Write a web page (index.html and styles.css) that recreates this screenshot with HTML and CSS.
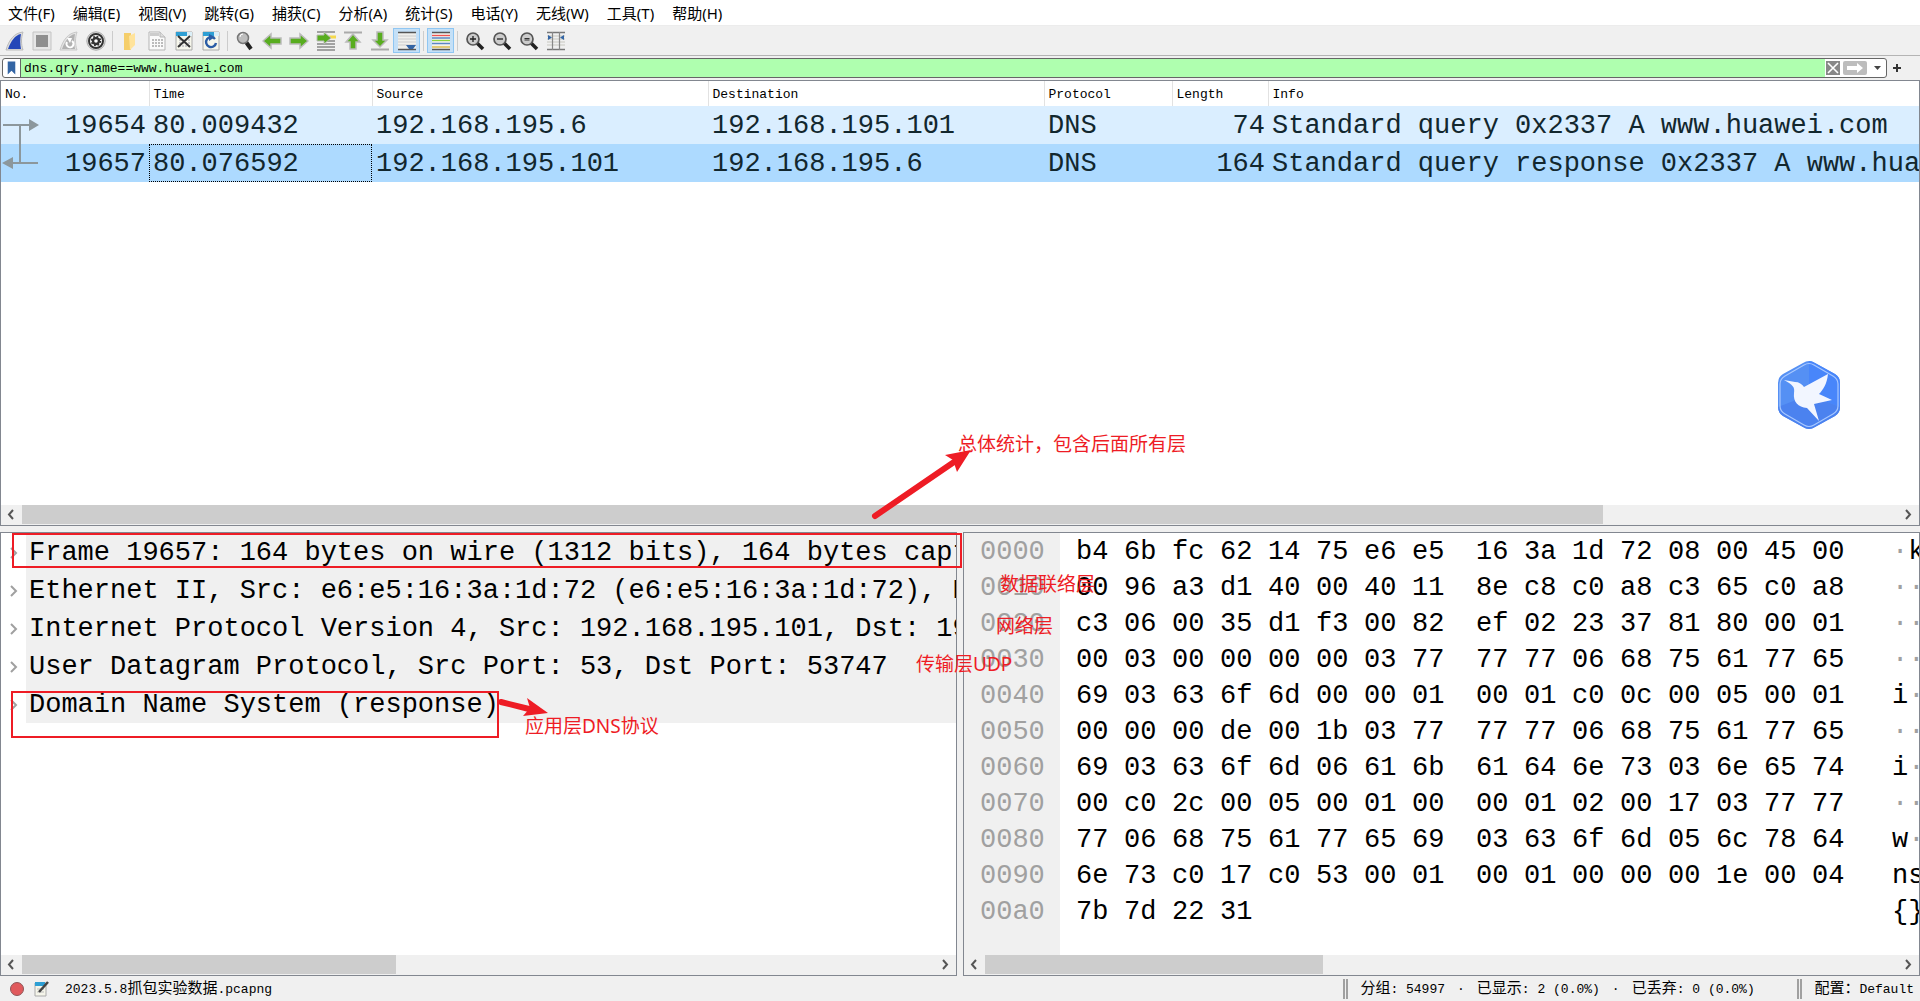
FILE: index.html
```html
<!DOCTYPE html>
<html lang="zh-CN">
<head>
<meta charset="utf-8">
<title>2023.5.8抓包实验数据.pcapng</title>
<link rel="stylesheet" href="styles.css">
</head>
<body>
<nav class="menu">
  <button>文件(F)</button><button>编辑(E)</button><button>视图(V)</button><button>跳转(G)</button><button>捕获(C)</button><button>分析(A)</button><button>统计(S)</button><button>电话(Y)</button><button>无线(W)</button><button>工具(T)</button><button>帮助(H)</button>
</nav>

<div class="toolbar">
  <button aria-label="开始捕获"><svg viewBox="0 0 20 20"><path d="M1 19C4 9 9 2 18 1c-2 6-2 12 0 18z" fill="#ddd" stroke="#bbb"/><path d="M3 18C6 10 10 4 16 3c-1 5-1 10 0 15z" fill="#2447b8"/></svg></button>
  <button aria-label="停止捕获"><svg viewBox="0 0 20 20"><path d="M1 1h18v18H1z" fill="#e6e6e6" stroke="#c4c4c4"/><path d="M4 4h12v12H4z" fill="#8f8f8f"/></svg></button>
  <button aria-label="重新捕获"><svg viewBox="0 0 20 20"><path d="M1 19C4 9 9 2 18 1c-2 6-2 12 0 18z" fill="#e4e4e4" stroke="#c8c8c8"/><path d="M3 18C6 10 10 4 16 3c-1 5-1 10 0 15z" fill="#b2b2b2"/><path d="M8 11a3.500 3.500 0 1 0 5-1" fill="none" stroke="#fff" stroke-width="2"/><path d="M8 7l5 0-2 5z" fill="#fff"/></svg></button>
  <button aria-label="捕获选项"><svg viewBox="0 0 20 20"><circle cx="10" cy="10" r="9.200" fill="#ddd" stroke="#aaa"/><circle cx="10" cy="10" r="7" fill="#fff" stroke="#333" stroke-width="2"/><circle cx="10" cy="10" r="3" fill="none" stroke="#333" stroke-width="2.400"/><circle cx="10" cy="10" r="4.500" fill="none" stroke="#333" stroke-width="1.600" stroke-dasharray="1.770"/></svg></button>
  <i class="sep"></i>
  <button aria-label="打开"><svg viewBox="0 0 20 20"><path d="M4 2h7v17H4z" fill="#f5ce6a"/><path d="M9 5l6-3v12l-5 5z" fill="#ffe39b"/></svg></button>
  <button aria-label="保存"><svg viewBox="0 0 20 20"><path d="M2 1h11l5 5v13H2z" fill="#fafafa" stroke="#b5b5b5"/><path d="M3 2h9v3H3z" fill="#ccc"/><path d="M13 1v5h5" fill="#ddd" stroke="#b5b5b5"/><path d="M5 9h11M5 12h11M5 15h11" stroke="#bbb" stroke-width="2" stroke-dasharray="2 1"/></svg></button>
  <button aria-label="关闭文件"><svg viewBox="0 0 20 20"><path d="M2 1h16v18H2z" fill="#f7f7ec" stroke="#aaa"/><path d="M2 1h16v4H2z" fill="#2e9fd4"/><path d="M13 1h5v4h-5z" fill="#dbeff8"/><path d="M5 9h11M5 12h11M5 15h11" stroke="#ccc" stroke-width="2" stroke-dasharray="2 1"/><path d="M4 5l12 11M16 5L4 16" stroke="#333" stroke-width="2"/></svg></button>
  <button aria-label="重新载入"><svg viewBox="0 0 20 20"><path d="M2 1h16v18H2z" fill="#f7f7ec" stroke="#aaa"/><path d="M2 1h16v4H2z" fill="#2e9fd4"/><path d="M13 1h5v4h-5z" fill="#dbeff8"/><path d="M14 8a5 5 0 1 0 1 4" fill="none" stroke="#2b5da5" stroke-width="2.400"/><path d="M8 3v7l6-4z" fill="#2b5da5"/></svg></button>
  <i class="sep"></i>
  <button aria-label="查找"><svg viewBox="0 0 20 20"><path d="M11 11l5 7" stroke="#222" stroke-width="4"/><circle cx="8" cy="7" r="5.500" fill="#bdbdbd" stroke="#777" stroke-width="1.500"/><path d="M5 6a3 3 0 0 1 3-3" stroke="#fff" fill="none"/></svg></button>
  <button aria-label="后退"><svg viewBox="0 0 20 20"><path d="M1 10l8-7v4h10v6H9v4z" fill="#58ad1f" stroke="#bbb" stroke-width="1.500"/></svg></button>
  <button aria-label="前进"><svg viewBox="0 0 20 20"><path d="M19 10l-8-7v4H1v6h10v4z" fill="#58ad1f" stroke="#bbb" stroke-width="1.500"/></svg></button>
  <button aria-label="转到分组"><svg viewBox="0 0 20 20"><path d="M1 1h18M1 13h18M1 16h18M1 19h18M10 10h9" stroke="#555" stroke-width="1.200"/><path d="M13 6h7" stroke="#f5d94d" stroke-width="3"/><path d="M15 7L8 1v3H1v6h7v3z" fill="#58ad1f" stroke="#bbb"/></svg></button>
  <button aria-label="首个分组"><svg viewBox="0 0 20 20"><path d="M1 1.500h18" stroke="#aaa" stroke-width="2"/><path d="M10 3l7 8h-4v7H7v-7H3z" fill="#58ad1f" stroke="#bbb" stroke-width="1.500"/></svg></button>
  <button aria-label="末个分组"><svg viewBox="0 0 20 20"><path d="M1 18.500h18" stroke="#aaa" stroke-width="2"/><path d="M10 16L3 9h4V1h6v8h4z" fill="#58ad1f" stroke="#bbb" stroke-width="1.500"/></svg></button>
  <button class="on" aria-label="自动滚动"><svg viewBox="0 0 20 20"><path d="M1 1h18v18H1z" fill="#f0f0ec"/><path d="M1 1.500h18M1 18.500h18" stroke="#555" stroke-width="1.300"/><path d="M1 5h18M1 8h18M1 11h18M1 14h18" stroke="#ccc"/><path d="M9 14h10l-3 4h-4z" fill="#3465a4"/></svg></button>
  <i class="sep"></i>
  <button class="on" aria-label="着色"><svg viewBox="0 0 20 20"><path d="M1 1h18v18H1z" fill="#f3f3ee"/><path d="M1 1.500h18M1 18.500h18" stroke="#555" stroke-width="1.300"/><path d="M1 4.500h18" stroke="#ef5350" stroke-width="1.300"/><path d="M1 7h18M1 12.500h18" stroke="#5b86c4" stroke-width="1.300"/><path d="M1 9.500h18" stroke="#8bd53f" stroke-width="1.300"/><path d="M1 16h18" stroke="#d9b338" stroke-width="1.300"/></svg></button>
  <i class="sep"></i>
  <button aria-label="放大"><svg viewBox="0 0 20 20"><path d="M12 12l6 6" stroke="#222" stroke-width="3.500"/><circle cx="8" cy="8" r="6" fill="#ccc" stroke="#555" stroke-width="1.700"/><path d="M5 8h6M8 5v6" stroke="#222" stroke-width="1.300"/></svg></button>
  <button aria-label="缩小"><svg viewBox="0 0 20 20"><path d="M12 12l6 6" stroke="#222" stroke-width="3.500"/><circle cx="8" cy="8" r="6" fill="#ccc" stroke="#555" stroke-width="1.700"/><path d="M5 8h6" stroke="#222" stroke-width="1.300"/></svg></button>
  <button aria-label="原始大小"><svg viewBox="0 0 20 20"><path d="M12 12l6 6" stroke="#222" stroke-width="3.500"/><circle cx="8" cy="8" r="6" fill="#ccc" stroke="#555" stroke-width="1.700"/><path d="M5.500 7.500h5M5.500 9h5" stroke="#333" stroke-width="1"/></svg></button>
  <button aria-label="调整列宽"><svg viewBox="0 0 20 20"><path d="M1 1.500h18M1 18.500h18" stroke="#777" stroke-width="1.300"/><path d="M1 5h18M1 8h18M1 11h18M1 14h18" stroke="#c8c8c0"/><path d="M6.500 1v18M13.500 1v18" stroke="#888" stroke-width="1.200"/><path d="M2 4l4 2.500L2 9zM18 4l-4 2.500L18 9z" fill="#3465a4"/></svg></button>
</div>

<div class="filter">
  <div class="field">
    <button class="mark" aria-label="书签"><svg viewBox="0 0 18 18"><path d="M5 2h8v14l-4-4-4 4z" fill="#3465a4"/></svg></button>
    <input aria-label="显示过滤器" value="dns.qry.name==www.huawei.com">
    <button class="clear" aria-label="清除"><svg viewBox="0 0 14 14"><path d="M2 2l10 10M12 2L2 12" stroke="#fff" stroke-width="1.600"/></svg></button>
    <button class="apply" aria-label="应用"><svg viewBox="0 0 24 14"><path d="M4 5h10V2l6 5-6 5V9H4z" fill="#fff"/></svg></button>
    <button class="drop" aria-label="历史"><svg viewBox="0 0 17 14"><path d="M5 5h7l-3.500 4z" fill="#444"/></svg></button>
  </div>
  <button class="plus" aria-label="添加"><svg viewBox="0 0 16 16"><path d="M8 4v8M4 8h8" stroke="#333" stroke-width="2"/></svg></button>
</div>

<main>
  <section class="pane packets">
    <div class="view">
      <table class="list">
        <colgroup><col class="c-no"><col class="c-time"><col class="c-addr"><col class="c-addr"><col class="c-proto"><col class="c-len"><col></colgroup>
        <thead><tr><th>No.</th><th>Time</th><th>Source</th><th>Destination</th><th>Protocol</th><th>Length</th><th>Info</th></tr></thead>
        <tbody>
          <tr><td class="num first">19654<svg class="flow" viewBox="0 0 40 76"><path d="M2 19h28M19 19v38M10 57h27" fill="none" stroke="#8c979c" stroke-width="2"/><path d="M28 13l10 6-10 6zM12 51L1 57l11 6z" fill="#8c979c"/></svg></td><td>80.009432</td><td>192.168.195.6</td><td>192.168.195.101</td><td>DNS</td><td class="num">74</td><td>Standard query 0x2337 A www.huawei.com</td></tr>
          <tr class="sel"><td class="num">19657</td><td class="focus">80.076592</td><td>192.168.195.101</td><td>192.168.195.6</td><td>DNS</td><td class="num">164</td><td>Standard query response 0x2337 A www.huawei.com</td></tr>
        </tbody>
      </table>
    </div>
    <div class="scroll"><button aria-label="向左"><svg viewBox="0 0 21 19"><path d="M12 5L8 9.500l4 4.500" /></svg></button><div class="track"><div class="thumb" style="width:84.3%"></div></div><button aria-label="向右"><svg viewBox="0 0 21 19"><path d="M8 5l4 4.500L8 14"/></svg></button></div>
  </section>

  <div class="lower">
    <section class="pane details">
      <ul class="tree">
        <li><button aria-label="展开"><svg viewBox="0 0 25 38"><path d="M10 15l5 5-5 5"/></svg></button><span>Frame 19657: 164 bytes on wire (1312 bits), 164 bytes captured</span></li>
        <li><button aria-label="展开"><svg viewBox="0 0 25 38"><path d="M10 15l5 5-5 5"/></svg></button><span>Ethernet II, Src: e6:e5:16:3a:1d:72 (e6:e5:16:3a:1d:72), Dst</span></li>
        <li><button aria-label="展开"><svg viewBox="0 0 25 38"><path d="M10 15l5 5-5 5"/></svg></button><span>Internet Protocol Version 4, Src: 192.168.195.101, Dst: 192</span></li>
        <li><button aria-label="展开"><svg viewBox="0 0 25 38"><path d="M10 15l5 5-5 5"/></svg></button><span>User Datagram Protocol, Src Port: 53, Dst Port: 53747</span></li>
        <li><button aria-label="展开"><svg viewBox="0 0 25 38"><path d="M10 15l5 5-5 5"/></svg></button><span>Domain Name System (response)</span></li>
      </ul>
      <div class="scroll"><button aria-label="向左"><svg viewBox="0 0 21 19"><path d="M12 5L8 9.500l4 4.500"/></svg></button><div class="track"><div class="thumb" style="width:41%"></div></div><button aria-label="向右"><svg viewBox="0 0 21 19"><path d="M8 5l4 4.500L8 14"/></svg></button></div>
    </section>

    <section class="pane bytes">
      <div class="dump">
        <table class="hex">
          <tbody>
          <tr><th>0000</th><td>b4</td><td>6b</td><td>fc</td><td>62</td><td>14</td><td>75</td><td>e6</td><td>e5</td><td>16</td><td>3a</td><td>1d</td><td>72</td><td>08</td><td>00</td><td>45</td><td>00</td><td class="ascii"><i>·</i>k</td></tr>
          <tr><th>0010</th><td>00</td><td>96</td><td>a3</td><td>d1</td><td>40</td><td>00</td><td>40</td><td>11</td><td>8e</td><td>c8</td><td>c0</td><td>a8</td><td>c3</td><td>65</td><td>c0</td><td>a8</td><td class="ascii"><i>··</i></td></tr>
          <tr><th>0020</th><td>c3</td><td>06</td><td>00</td><td>35</td><td>d1</td><td>f3</td><td>00</td><td>82</td><td>ef</td><td>02</td><td>23</td><td>37</td><td>81</td><td>80</td><td>00</td><td>01</td><td class="ascii"><i>··</i></td></tr>
          <tr><th>0030</th><td>00</td><td>03</td><td>00</td><td>00</td><td>00</td><td>00</td><td>03</td><td>77</td><td>77</td><td>77</td><td>06</td><td>68</td><td>75</td><td>61</td><td>77</td><td>65</td><td class="ascii"><i>··</i></td></tr>
          <tr><th>0040</th><td>69</td><td>03</td><td>63</td><td>6f</td><td>6d</td><td>00</td><td>00</td><td>01</td><td>00</td><td>01</td><td>c0</td><td>0c</td><td>00</td><td>05</td><td>00</td><td>01</td><td class="ascii">i<i>·</i></td></tr>
          <tr><th>0050</th><td>00</td><td>00</td><td>00</td><td>de</td><td>00</td><td>1b</td><td>03</td><td>77</td><td>77</td><td>77</td><td>06</td><td>68</td><td>75</td><td>61</td><td>77</td><td>65</td><td class="ascii"><i>··</i></td></tr>
          <tr><th>0060</th><td>69</td><td>03</td><td>63</td><td>6f</td><td>6d</td><td>06</td><td>61</td><td>6b</td><td>61</td><td>64</td><td>6e</td><td>73</td><td>03</td><td>6e</td><td>65</td><td>74</td><td class="ascii">i<i>·</i></td></tr>
          <tr><th>0070</th><td>00</td><td>c0</td><td>2c</td><td>00</td><td>05</td><td>00</td><td>01</td><td>00</td><td>00</td><td>01</td><td>02</td><td>00</td><td>17</td><td>03</td><td>77</td><td>77</td><td class="ascii"><i>··</i></td></tr>
          <tr><th>0080</th><td>77</td><td>06</td><td>68</td><td>75</td><td>61</td><td>77</td><td>65</td><td>69</td><td>03</td><td>63</td><td>6f</td><td>6d</td><td>05</td><td>6c</td><td>78</td><td>64</td><td class="ascii">w<i>·</i></td></tr>
          <tr><th>0090</th><td>6e</td><td>73</td><td>c0</td><td>17</td><td>c0</td><td>53</td><td>00</td><td>01</td><td>00</td><td>01</td><td>00</td><td>00</td><td>00</td><td>1e</td><td>00</td><td>04</td><td class="ascii">ns</td></tr>
          <tr><th>00a0</th><td>7b</td><td>7d</td><td>22</td><td>31</td><td></td><td></td><td></td><td></td><td></td><td></td><td></td><td></td><td></td><td></td><td></td><td></td><td class="ascii">{}</td></tr>
          </tbody>
        </table>
      </div>
      <div class="scroll"><button aria-label="向左"><svg viewBox="0 0 21 19"><path d="M12 5L8 9.500l4 4.500"/></svg></button><div class="track"><div class="thumb" style="width:37%"></div></div><button aria-label="向右"><svg viewBox="0 0 21 19"><path d="M8 5l4 4.500L8 14"/></svg></button></div>
    </section>
  </div>
</main>

<footer class="status">
  <svg class="dot" viewBox="0 0 16 16"><circle cx="8" cy="8" r="6.500" fill="#e0595c" stroke="#8f5557"/></svg>
  <svg class="note" viewBox="0 0 16 16"><path d="M1 2h11v13H1z" fill="#f5f5ea" stroke="#aaa"/><path d="M1 1h10v4H1z" fill="#2e9fd4"/><path d="M3 8h7M3 11h7" stroke="#bbb"/><path d="M5 11L14 1" stroke="#444" stroke-width="2.500"/></svg>
  <span class="file">2023.5.8<b>抓包实验数据</b>.pcapng</span>
  <span class="counts"><span><b>分组</b>: 54997</span><span>·</span><span><b>已显示</b>: 2 (0.0%)</span><span>·</span><span><b>已丢弃</b>: 0 (0.0%)</span></span>
  <span class="profile"><span><b>配置：</b>Default</span></span>
</footer>

<svg class="marks" viewBox="0 0 1000 760" width="1000" height="760">
  <g fill="none" stroke="#ee1c25" stroke-width="2"><path d="M13 534h948v33H13zM12 692h486v45H12z"/></g>
  <g stroke="#ee1c25" stroke-width="6" stroke-linecap="round"><path d="M875 516l79-54M501 702l28 7"/></g>
  <path d="M971 450l-26 5 8 5 4 12zM548 713l-21-15 3 10-7 8z" fill="#ee1c25"/>
</svg>
<span class="tag tag-all">总体统计，包含后面所有层</span>
<span class="tag tag-link">数据联络层</span>
<span class="tag tag-net">网络层</span>
<span class="tag tag-udp">传输层UDP</span>
<span class="tag tag-dns">应用层DNS协议</span>

<svg class="bird" viewBox="0 0 64 70">
  <path d="M26 3q6-4 12 0l20 11q5 3 5 9v24q0 6-5 9L38 67q-6 4-12 0L6 56q-5-3-5-9V23q0-6 5-9z" fill="#5590f4"/>
  <path d="M32 1q3 0 6 2l20 11q5 3 5 9v24L32 35z" fill="#4886fa"/>
  <path d="M63 47q0 6-5 9L38 67q-6 4-12 0L6 56q-5-3-5-9l31-12z" fill="#4b82ef"/>
  <path d="M27 5q5-3 10 0l19 11q5 3 5 8v22q0 5-5 8L37 65q-5 3-10 0L8 54q-5-3-5-8V24q0-5 5-8z" fill="none" stroke="#a8c8ff" stroke-width="1.200"/>
  <path d="M7 20l11 2c4 0 7 2 9 5L51 14c-1 10-5 16-9 20l13 6-18 4 5 17-12-13c-9-1-14-6-13-15 1-6-1-8-10-13z" fill="#f2f6ff"/>
</svg>
</body>
</html>
```
FILE: styles.css
```css
* { box-sizing: border-box; }
body {
  margin: 0;
  height: 100vh;
  display: flex;
  flex-direction: column;
  position: relative;
  overflow: hidden;
  background: #f0f0f0;
  color: #000;
  font: 13px/16px "Liberation Mono", "Noto Sans CJK SC", monospace;
}
button {
  margin: 0;
  padding: 0;
  border: 0;
  background: none;
  color: inherit;
  font: inherit;
}
svg { display: block; }

.menu {
  display: flex;
  gap: 18px;
  height: 26px;
  padding: 0 8px;
  background: #fff;
  border-bottom: 1px solid #ececec;
  font: 15px/24px "Noto Sans", "Noto Sans CJK SC", sans-serif;
}

.toolbar {
  display: flex;
  align-items: center;
  height: 30px;
  padding: 0 1px;
  border-bottom: 1px solid #b4b4b4;
}
.toolbar button {
  display: grid;
  place-items: center;
  width: 27px;
  height: 25px;
}
.toolbar svg { width: 20px; height: 20px; }
.toolbar .on { background: #c4e0f7; border: 1px solid #8fc6f2; }
.sep { width: 1px; height: 20px; margin: 0 3px; background: #ccc; }

.filter {
  display: flex;
  align-items: center;
  gap: 2px;
  height: 24px;
  padding: 0 15px 0 2px;
}
.field {
  flex: 1;
  display: flex;
  align-items: center;
  height: 20px;
  border: 1px solid #666;
  border-radius: 3px;
  background: #fff;
  overflow: hidden;
}
.mark svg { width: 17px; height: 18px; }
.field input {
  flex: 1;
  min-width: 0;
  height: 18px;
  border: 0;
  border-left: 1px solid #666;
  padding: 0 3px;
  background: #afffaf;
  color: #000;
  font: inherit;
  outline: 0;
}
.clear { background: #888; width: 14px; height: 14px; margin: 0 3px 0 1px; }
.apply { background: #bdbdbd; width: 24px; height: 14px; border-radius: 2px; }
.drop { width: 17px; margin-left: 2px; }
.plus { width: 16px; }

main {
  flex: 1;
  min-height: 0;
  display: flex;
  flex-direction: column;
  gap: 6px;
}
.pane {
  display: flex;
  flex-direction: column;
  min-width: 0;
  background: #fff;
  border: 1px solid #828790;
  overflow: hidden;
}
.packets { flex: 1 1 0; min-height: 0; }
.lower {
  flex: 1 1 0;
  min-height: 0;
  display: flex;
  gap: 6px;
}
.details { flex: 957 1 0; }
.bytes { flex: 957 1 0; }
.view, .tree, .dump { flex: 1; min-height: 0; overflow: hidden; }

.list {
  width: 100%;
  table-layout: fixed;
  border-collapse: collapse;
  white-space: nowrap;
}
.c-no { width: 148px; }
.c-time { width: 223px; }
.c-addr { width: 336px; }
.c-proto { width: 128px; }
.c-len { width: 96px; }
.list th {
  height: 25px;
  padding: 2px 4px 0;
  text-align: left;
  font-weight: 400;
  border-right: 1px solid #e2e2e2;
}
.list th:last-child { border-right: 0; }
.list td {
  height: 38px;
  padding: 2px 3px 0 4px;
  overflow: hidden;
  background: #daeeff;
  color: #12272e;
  font-size: 27px;
  line-height: 36px;
}
.list .sel td { background: #addaff; }
.list .num { text-align: right; }
.list .first { position: relative; overflow: visible; }
.flow { position: absolute; left: 0; top: 0; width: 40px; height: 76px; z-index: 1; }
.list .focus { outline: 1px dotted #000; outline-offset: -1px; }

.scroll { display: flex; height: 20px; padding-bottom: 1px; background: #f0f0f0; }
.scroll button { width: 21px; height: 19px; }
.scroll path { fill: none; stroke: #555; stroke-width: 2; }
.track { flex: 1; }
.thumb { height: 19px; background: #cdcdcd; }

.tree { margin: 0; padding: 0; list-style: none; }
.tree li { display: flex; height: 38px; }
.tree button { flex: none; width: 25px; }
.tree path { fill: none; stroke: #a0a0a0; stroke-width: 2; }
.tree span {
  flex: 1;
  min-width: 0;
  padding: 2px 0 0 3px;
  overflow: hidden;
  white-space: nowrap;
  background: #f0f0f0;
  font-size: 27px;
  line-height: 36px;
}

.dump { display: flex; background: linear-gradient(to right, #f0f0f0 96px, #fff 96px); }
.hex {
  table-layout: fixed;
  border-collapse: collapse;
  width: 956px;
  margin-top: 1px;
  align-self: flex-start;
  font-size: 27px;
  line-height: 36px;
}
.hex th { width: 112px; height: 36px; padding: 0 0 0 16px; text-align: left; font-weight: 400; color: #a0a0a0; }
.hex td { width: 48px; padding: 0; white-space: nowrap; }
.hex td:nth-child(9) { width: 64px; }
.hex td:nth-child(17) { width: 80px; }
.hex .ascii { width: auto; }
.hex i { color: #a0a0a0; font-style: normal; }

.status {
  display: flex;
  align-items: center;
  height: 25px;
  padding: 0 6px 0 9px;
}
.status b { font-weight: 400; font-size: 15px; }
.status span { line-height: 20px; }
.dot, .note { width: 16px; height: 16px; }
.note { margin: 0 15px 0 9px; }
.file { flex: 1; padding-top: 2px; }
.counts, .profile {
  display: flex;
  align-items: center;
  height: 20px;
  padding: 2px 0 0 12px;
  border-left: 5px double #a0a0a0;
}
.counts { gap: 12px; width: 454px; }

.marks { position: absolute; left: 0; top: 0; }
.tag {
  position: absolute;
  color: #ee1c25;
  white-space: nowrap;
  font: 19px/24px "Noto Sans", "Noto Sans CJK SC", sans-serif;
}
.tag-all { left: 958px; top: 432px; }
.tag-link { left: 1000px; top: 572px; }
.tag-net { left: 996px; top: 614px; }
.tag-udp { left: 916px; top: 652px; }
.tag-dns { left: 525px; top: 714px; }
.bird { position: absolute; right: 79px; top: 360px; width: 64px; height: 70px; }
```
